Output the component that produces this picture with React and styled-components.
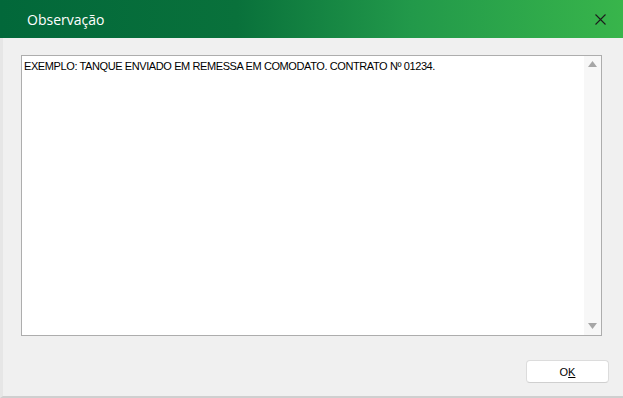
import React from "react";
import styled, { createGlobalStyle } from "styled-components";

const Global = createGlobalStyle`
  html, body { margin: 0; padding: 0; background: #ffffff; }
  body { width: 623px; height: 398px; overflow: hidden; }
  * { box-sizing: border-box; }
`;

const Window = styled.div`
  width: 623px;
  height: 398px;
  display: flex;
  flex-direction: column;
  background: #f0f0f0;
`;

const TitleBar = styled.div`
  height: 38px;
  flex: 0 0 38px;
  display: flex;
  align-items: center;
  justify-content: space-between;
  padding: 0 17px 0 27px;
  background: linear-gradient(90deg, #02683a 0%, #09713b 38%, #22994a 66%, #38b54b 100%);
`;

const Title = styled.span`
  font-family: "Open Sans", "Noto Sans", sans-serif;
  font-size: 14px;
  color: #ffffff;
  line-height: 1;
  margin-top: 1px;
`;

const CloseButton = styled.div`
  width: 12px;
  height: 12px;
  display: flex;
  align-items: center;
  justify-content: center;
`;

const Body = styled.div`
  flex: 1;
  display: flex;
  flex-direction: column;
  padding: 17px 21px 13px 18px;
  border-left: 3px solid #e6e6e6;
  border-bottom: 2px solid #cfcfcf;
`;

const TextBox = styled.div`
  height: 281px;
  display: flex;
  background: #ffffff;
  border: 1px solid #adadad;
`;

const TextContent = styled.div`
  flex: 1;
  padding: 3px 2px;
  font-family: "Liberation Sans", Arial, sans-serif;
  font-size: 11px;
  letter-spacing: -0.4px;
  line-height: 14px;
  color: #000000;
`;

const ScrollBar = styled.div`
  width: 17px;
  display: flex;
  flex-direction: column;
  justify-content: space-between;
  align-items: center;
  background: #f7f7f7;
  padding: 5px 0 6px;
`;

const Arrow = styled.svg`
  width: 9px;
  height: 6px;
  display: block;
`;

const Footer = styled.div`
  display: flex;
  justify-content: flex-end;
  margin-top: auto;
`;

const Button = styled.button`
  width: 83px;
  height: 23px;
  margin-right: -7px;
  background: #ffffff;
  border: 1px solid #dcdcdc;
  border-bottom-color: #cfcfcf;
  border-radius: 4px;
  font-family: "Liberation Sans", Arial, sans-serif;
  font-size: 11px;
  color: #000000;
  padding: 0;
  display: flex;
  align-items: center;
  justify-content: center;
`;

const Mnemonic = styled.span`
  text-decoration: underline;
`;

export default function App() {
  return (
    <>
      <Global />
      <Window>
        <TitleBar>
          <Title>Observação</Title>
          <CloseButton>
            <svg width="11" height="11" viewBox="0 0 11 11">
              <path d="M0.5 0.5 L10.5 10.5 M10.5 0.5 L0.5 10.5" stroke="#1c1c1c" strokeWidth="1.1" fill="none" />
            </svg>
          </CloseButton>
        </TitleBar>
        <Body>
          <TextBox>
            <TextContent>
              EXEMPLO: TANQUE ENVIADO EM REMESSA EM COMODATO. CONTRATO Nº 01234.
            </TextContent>
            <ScrollBar>
              <Arrow viewBox="0 0 9 6">
                <path d="M4.5 0 L9 6 L0 6 Z" fill="#a6a6a6" />
              </Arrow>
              <Arrow viewBox="0 0 9 6">
                <path d="M0 0 L9 0 L4.5 6 Z" fill="#a6a6a6" />
              </Arrow>
            </ScrollBar>
          </TextBox>
          <Footer>
            <Button>
              O<Mnemonic>K</Mnemonic>
            </Button>
          </Footer>
        </Body>
      </Window>
    </>
  );
}
